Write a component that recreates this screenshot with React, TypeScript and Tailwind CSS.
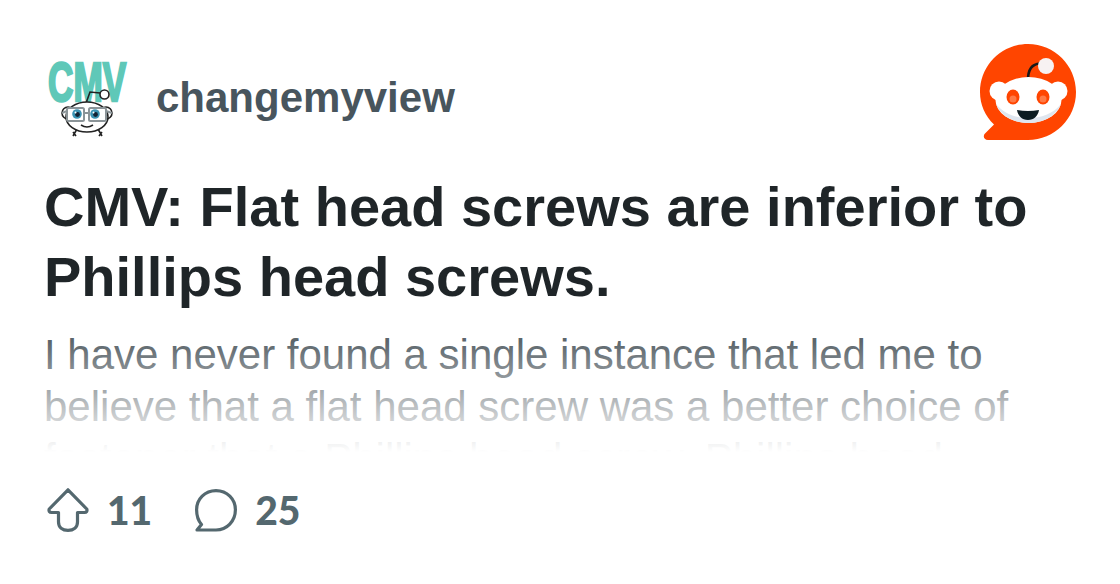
function CmvLogo() {
  return (
    <svg width="84" height="84" viewBox="0 0 84 84" className="shrink-0">
      <text transform="translate(4 45) scale(0.64 1)" fontFamily="Liberation Sans, sans-serif" fontWeight="700" fontSize="55" fill="#5fc8b8" stroke="#5fc8b8" strokeWidth="2.500">CMV</text>
      {/* antenna */}
      <path d="M41 50 L46 36 L56 37" fill="none" stroke="#222" strokeWidth="1.6" />
      <circle cx="60.500" cy="38.500" r="4.500" fill="#fff" stroke="#222" strokeWidth="1.600" />
      {/* ears */}
      <circle cx="24" cy="57" r="6" fill="#fff" stroke="#222" strokeWidth="1.600" />
      <circle cx="62" cy="57" r="6" fill="#fff" stroke="#222" strokeWidth="1.600" />
      {/* feet */}
      <path d="M33 73 L29 80 M29 76 L32 80 M54 73 L58 80 M58 76 L55 80" stroke="#222" strokeWidth="1.600" fill="none" />
      {/* head */}
      <ellipse cx="43" cy="61" rx="21" ry="15" fill="#fff" stroke="#222" strokeWidth="1.600" />
      {/* glasses */}
      <rect x="23" y="52" width="17" height="13" rx="1.500" fill="#fff" stroke="#8b9498" strokeWidth="2" />
      <rect x="45" y="52" width="17" height="13" rx="1.500" fill="#fff" stroke="#8b9498" strokeWidth="2" />
      <path d="M40 57 H45 M18 57 L23 55 M62 55 L68 57" stroke="#8b9498" strokeWidth="2" fill="none" />
      <circle cx="33" cy="58" r="4.800" fill="#3a93b3" />
      <circle cx="51" cy="58" r="4.800" fill="#3a93b3" />
      <circle cx="33.500" cy="58.500" r="2.400" fill="#123" />
      <circle cx="51.500" cy="58.500" r="2.400" fill="#123" />
      <circle cx="31.500" cy="56.500" r="1" fill="#fff" />
      <circle cx="49.500" cy="56.500" r="1" fill="#fff" />
      <path d="M37 69 Q43 73 49 69" fill="none" stroke="#222" strokeWidth="1.600" />
    </svg>
  );
}

function RedditLogo() {
  return (
    <svg width="96" height="96" viewBox="0 0 96 96" className="shrink-0">
      <path d="M48 0 C74.500 0 96 21.500 96 48 C96 74.500 74.500 96 48 96 H8 C4 96 2.500 92 5 89.500 L14 80.500 C5 72 0 60.500 0 48 C0 21.500 21.500 0 48 0 Z" fill="#ff4500" />
      <path d="M48 36 C48 27 51 20 60 19.500" fill="none" stroke="#1a1a1a" strokeWidth="2.600" strokeLinecap="round" />
      <circle cx="66" cy="22" r="8" fill="#f7f2f2" />
      <circle cx="19" cy="47" r="9.500" fill="#fff" />
      <circle cx="78" cy="47" r="9.500" fill="#fff" />
      <ellipse cx="48.500" cy="56" rx="33" ry="23" fill="#fff" />
      <path d="M16 60 C20 71 33 79 48.500 79 C64 79 77 71 81 60 C73 70 61 74 48.500 74 C36 74 24 70 16 60 Z" fill="#dfe6ef" />
      <ellipse cx="33" cy="53" rx="6.500" ry="7.500" fill="#ff4500" />
      <ellipse cx="63" cy="53" rx="6.500" ry="7.500" fill="#ff4500" />
      <circle cx="33" cy="55" r="3.500" fill="#ff7a45" />
      <circle cx="63" cy="55" r="3.500" fill="#ff7a45" />
      <path d="M37 66 Q48 68 59 66 C58 72 54 76 48 76 C42 76 38 72 37 66 Z" fill="#0c1c22" />
    </svg>
  );
}

function UpvoteIcon() {
  return (
    <svg width="42" height="44" viewBox="0 0 42 44" fill="none" stroke="#54686f" strokeWidth="3.200" strokeLinejoin="round">
      <path d="M21 1.800 L39.800 21 C40.500 23 39.500 24.500 37.500 24.500 H30.500 V34 C30.500 39.500 26.500 42.400 21 42.400 C15.500 42.400 11.500 39.500 11.500 34 V24.500 H4.500 C2.500 24.500 1.500 23 2.200 21 Z" />
    </svg>
  );
}

function CommentIcon() {
  return (
    <svg width="42" height="43" viewBox="0 0 42 43" fill="none" stroke="#54686f" strokeWidth="3.200" strokeLinejoin="round">
      <path d="M21 1.600 C32 1.600 40.400 10 40.400 20.800 C40.400 32 32 41 21 41 H2 L6.500 35.500 C3 31.500 1.600 26.500 1.600 20.800 C1.600 10 10 1.600 21 1.600 Z" />
    </svg>
  );
}

export default function App() {
  return (
    <div className="w-[1120px] h-[584px] bg-white overflow-hidden px-[44px] pt-[44px] font-['Liberation_Sans',sans-serif]">
      <div className="flex items-start justify-between h-[96px]">
        <div className="flex items-center gap-[28px] pt-[12px]">
          <CmvLogo />
          <span className="text-[42px] leading-[52px] font-bold text-[#48555d] -mt-[1px]">changemyview</span>
        </div>
        <RedditLogo />
      </div>

      <h1 className="mt-[32px] text-[56px] leading-[70px] font-bold text-[#1f2528]">
        CMV: Flat head screws are inferior to
        <br />
        Phillips head screws.
      </h1>

      <div className="relative mt-[17px] h-[123px] overflow-hidden">
        <p className="text-[42px] leading-[52px] text-[#5c666c]">
          I have never found a single instance that led me to
          <br />
          believe that a flat head screw was a better choice of
          <br />
          fastener that a Phillips head screw. Phillips head
        </p>
        <div className="absolute inset-0 bg-linear-to-b from-white/0 from-[10%] to-white" />
      </div>

      <div className="mt-[34px] flex items-center">
        <div className="ml-[3px]">
          <UpvoteIcon />
        </div>
        <span className="ml-[18px] text-[39px] leading-[48px] font-black text-[#54686f] font-['Lato',sans-serif]">11</span>
        <div className="ml-[43px]">
          <CommentIcon />
        </div>
        <span className="ml-[18px] text-[39px] leading-[48px] font-black text-[#54686f] font-['Lato',sans-serif]">25</span>
      </div>
    </div>
  );
}
